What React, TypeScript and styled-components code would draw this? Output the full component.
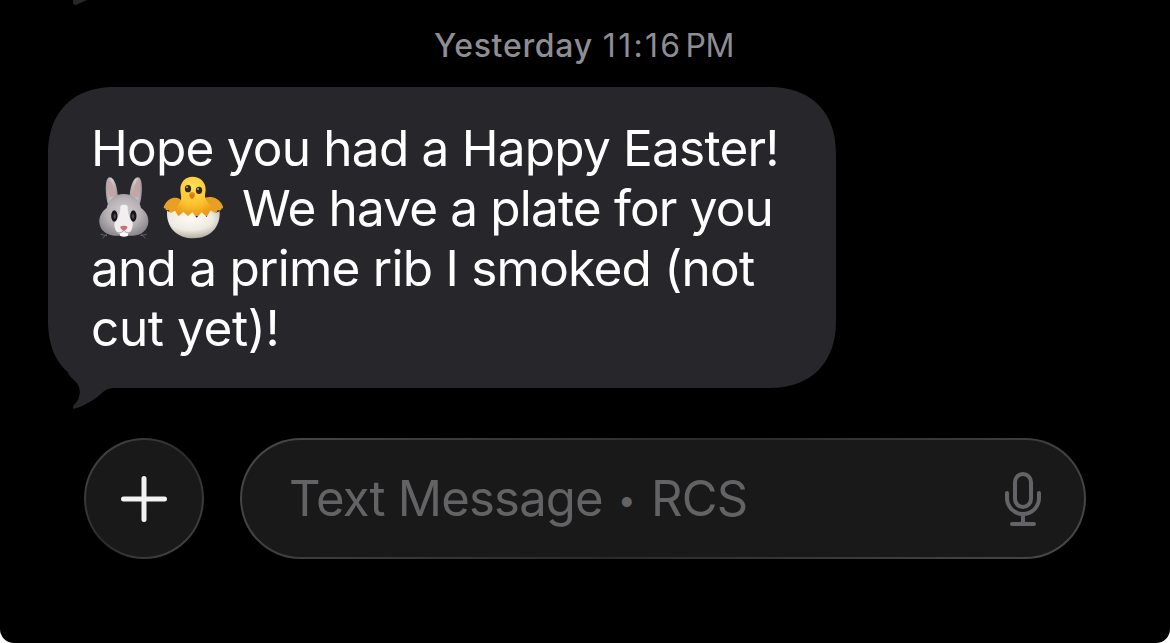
import styled, { createGlobalStyle } from 'styled-components';

const GlobalStyle = createGlobalStyle`
  * {
    box-sizing: border-box;
  }

  body {
    margin: 0;
    background: #fff;
    font-family: Inter, 'Liberation Sans', sans-serif;
  }
`;

const Screen = styled.main`
  display: flex;
  flex-direction: column;
  position: relative;
  height: 643px;
  padding: 27px 0 0 48px;
  overflow: hidden;
  background: #000;
  border-radius: 0 0 14px 14px;
`;

const PreviousTail = styled.svg`
  position: absolute;
  top: 0;
  left: 72px;
`;

const Timestamp = styled.div`
  display: flex;
  gap: 10px;
  height: 38px;
  padding-left: 386px;
  color: #8d8d93;
  font-size: 32px;
  line-height: 38px;
  white-space: nowrap;
`;

const Day = styled.span`
  font-weight: 500;
  letter-spacing: 0.7px;
`;

const Time = styled.span`
  display: flex;
  gap: 3px;
  letter-spacing: -0.3px;
`;

const Digits = styled.span`
  letter-spacing: 2.3px;
`;

const Bubble = styled.div`
  position: relative;
  width: 788px;
  height: 301px;
  margin-top: 22px;
  padding: 31px 43px;
  background: #27262b;
  border-radius: 60px;

  @supports (corner-shape: superellipse(1.2)) {
    border-radius: 68px;
    corner-shape: superellipse(1.2);
  }
`;

const BubbleTail = styled.svg`
  position: absolute;
  left: 0;
  bottom: -21px;
`;

const Line = styled.div<{ $spacing: number }>`
  display: flex;
  align-items: center;
  height: 60px;
  color: #fff;
  font-size: 49.5px;
  line-height: 60px;
  letter-spacing: ${({ $spacing }) => $spacing}px;
  white-space: pre;
`;

const Emojis = styled.span`
  display: flex;
  gap: 12px;
  width: 151px;
  padding-left: 7px;

  svg {
    flex: none;
  }
`;

const Composer = styled.div`
  display: flex;
  gap: 36px;
  margin: 50px 0 0 36px;
`;

const glass = `
  border: 2px solid transparent;
  height: 121px;
  background:
    linear-gradient(#191919, #191919) padding-box,
    linear-gradient(135deg, #484848, #2b2b2b 50%, #484848) border-box;
`;

const AddButton = styled.button`
  ${glass}
  display: grid;
  place-items: center;
  width: 120px;
  padding: 0;
  border-radius: 50%;
`;

const Field = styled.div`
  ${glass}
  display: flex;
  align-items: center;
  justify-content: space-between;
  width: 846px;
  padding: 0 42px 0 47px;
  border-radius: 61px;
`;

const Placeholder = styled.span`
  color: #636366;
  font-size: 49px;
  line-height: 60px;
  letter-spacing: -0.8px;
  white-space: pre;
`;

const Bullet = styled.span`
  margin: 0 3px 0 2px;
  font-size: 32px;
  line-height: 1;
  vertical-align: 5px;
`;

const Rabbit = () => (
  <svg width="53" height="66" viewBox="40 30 159 198">
    <defs>
      <radialGradient id="fur" cx="50%" cy="45%" r="58%">
        <stop offset="0" stopColor="#d3cdd0" />
        <stop offset="0.6" stopColor="#b8b2b6" />
        <stop offset="1" stopColor="#8d888f" />
      </radialGradient>
      <linearGradient id="ear" x1="0" x2="1">
        <stop offset="0" stopColor="#a59fa4" />
        <stop offset="0.5" stopColor="#d2cccf" />
        <stop offset="1" stopColor="#98939a" />
      </linearGradient>
    </defs>
    <path d="M69 116C61 84 60 38 75 37c16 0 24 34 25 66z" fill="url(#ear)" />
    <path d="M166 116c8-32 9-78-6-79-16 0-25 34-26 66z" fill="url(#ear)" />
    <path d="M76 98c-6-20-9-49-3-52 9-1 17 26 19 46z" fill="#c6a3a4" />
    <path d="M158 98c6-20 10-49 4-52-9-1-17 26-20 46z" fill="#c6a3a4" />
    <path
      d="M49 208l17 4M54 219l12-11M185 208l-17 4M182 219l-14-13"
      stroke="#626068"
      strokeWidth="3"
      strokeLinecap="round"
    />
    <path
      d="M117 87c-27 0-46 17-51 42-13 9-23 24-22 42 1 24 21 39 45 41h57c25-1 44-18 45-41 1-18-8-32-22-42-4-25-24-42-52-42z"
      fill="url(#fur)"
    />
    <path
      d="M107 123c5-5 17-5 22 0 0 18 4 35 13 45 5 11 1 28-9 37-10 5-24 5-32 0-11-9-15-26-9-37 11-11 15-27 15-45z"
      fill="#f1eeef"
    />
    <ellipse cx="89" cy="153" rx="9.5" ry="17" fill="#17151a" />
    <ellipse cx="146" cy="153" rx="9.5" ry="17" fill="#17151a" />
    <ellipse cx="90" cy="154" rx="3.5" ry="8" fill="#4c4a50" />
    <ellipse cx="145" cy="154" rx="3.5" ry="8" fill="#4c4a50" />
    <path d="M106 204h24v8q-12 6-24 0z" fill="#fff" />
    <path
      d="M117 192c-1 9-9 13-18 11M118 192c1 9 9 13 18 11"
      fill="none"
      stroke="#9a9196"
      strokeWidth="2.5"
    />
    <path d="M107 185c4-4 17-4 21 0 2 4-7 12-10 12s-13-8-11-12z" fill="#c96f80" />
  </svg>
);

const Chick = () => (
  <svg width="61" height="66" viewBox="234 30 183 198">
    <defs>
      <radialGradient id="down" cx="48%" cy="25%" r="75%">
        <stop offset="0" stopColor="#ffdf58" />
        <stop offset="0.6" stopColor="#fcc42f" />
        <stop offset="1" stopColor="#e99b18" />
      </radialGradient>
      <radialGradient id="shell" cx="45%" cy="30%" r="75%">
        <stop offset="0" stopColor="#fdfbf5" />
        <stop offset="0.55" stopColor="#eeebe2" />
        <stop offset="1" stopColor="#aaa397" />
      </radialGradient>
    </defs>
    <path
      d="M287 104c-14-11-39-7-50 20-2 5 0 8 4 5 0 7 4 9 9 5l6 11h50z"
      fill="#e6a024"
    />
    <path
      d="M360 98c17-6 42-1 53 24 3 7 0 10-4 8 1 6-4 9-10 5l-8 11h-45z"
      fill="#e6a024"
    />
    <path
      d="M323 35c-22 0-37 16-37 38 0 12 4 20 2 31-3 13-20 22-22 49h119c0-31-20-40-24-53-3-9 1-15 1-27 0-22-17-38-39-38z"
      fill="url(#down)"
    />
    <path
      d="M246 137l13 6 11-6 10 17 15-13 14 12 13-11 13 16 15-16 15 14 12-20 13 8 14-5c3 48-29 81-78 81-51 0-83-33-80-83z"
      fill="url(#shell)"
    />
    <ellipse cx="309" cy="71" rx="9.5" ry="11" fill="#302b16" />
    <ellipse cx="342" cy="76" rx="9.5" ry="11" fill="#302b16" />
    <circle cx="306" cy="67" r="3" fill="#b9ad77" />
    <circle cx="339" cy="72" r="3" fill="#b9ad77" />
    <path d="M313 87c2-8 17-7 17 1 0 5-5 14-9 14s-9-9-8-15z" fill="#dc7814" />
    <path d="M314 88q8-6 15 1" fill="none" stroke="#f9a83a" strokeWidth="2" />
  </svg>
);

const Plus = () => (
  <svg width="48" height="48" viewBox="0 0 48 48">
    <path d="M24 3.5v41M3.5 24h41" stroke="#f2f2f2" strokeWidth="5" strokeLinecap="round" />
  </svg>
);

const Microphone = () => (
  <svg
    width="38"
    height="56"
    viewBox="0 0 38 56"
    fill="none"
    stroke="#646468"
    strokeWidth="4"
    strokeLinecap="round"
  >
    <rect x="11" y="3" width="16" height="33" rx="8" />
    <path d="M3 22v5a16 16 0 0 0 32 0V22M19 43V53M8 53h22" />
  </svg>
);

export default function App() {
  return (
    <>
      <GlobalStyle />
      <Screen>
        <PreviousTail width="20" height="6">
          <path d="M1 0h14Q8 3 4 5 0 5 1 0z" fill="#27262b" />
        </PreviousTail>
        <Timestamp>
          <Day>Yesterday</Day>
          <Time>
            <Digits>11:16</Digits>
            <span>PM</span>
          </Time>
        </Timestamp>
        <Bubble>
          <Line $spacing={-0.77}>Hope you had a Happy Easter!</Line>
          <Line $spacing={-0.84}>
            <Emojis>
              <Rabbit />
              <Chick />
            </Emojis>
            We have a plate for you
          </Line>
          <Line $spacing={-0.75}>and a prime rib I smoked (not</Line>
          <Line $spacing={-0.4}>cut yet)!</Line>
          <BubbleTail width="70" height="62">
            <path
              d="M20 26Q22 30 26 33C31 37 33 43 31 50 30 56 24 58 25 61.500 28 63 42 55 48 51 58 43 58 41 68 41V20H30z"
              fill="#27262b"
            />
          </BubbleTail>
        </Bubble>
        <Composer>
          <AddButton aria-label="Add attachment">
            <Plus />
          </AddButton>
          <Field>
            <Placeholder>
              Text Message <Bullet>•</Bullet> RCS
            </Placeholder>
            <Microphone />
          </Field>
        </Composer>
      </Screen>
    </>
  );
}
